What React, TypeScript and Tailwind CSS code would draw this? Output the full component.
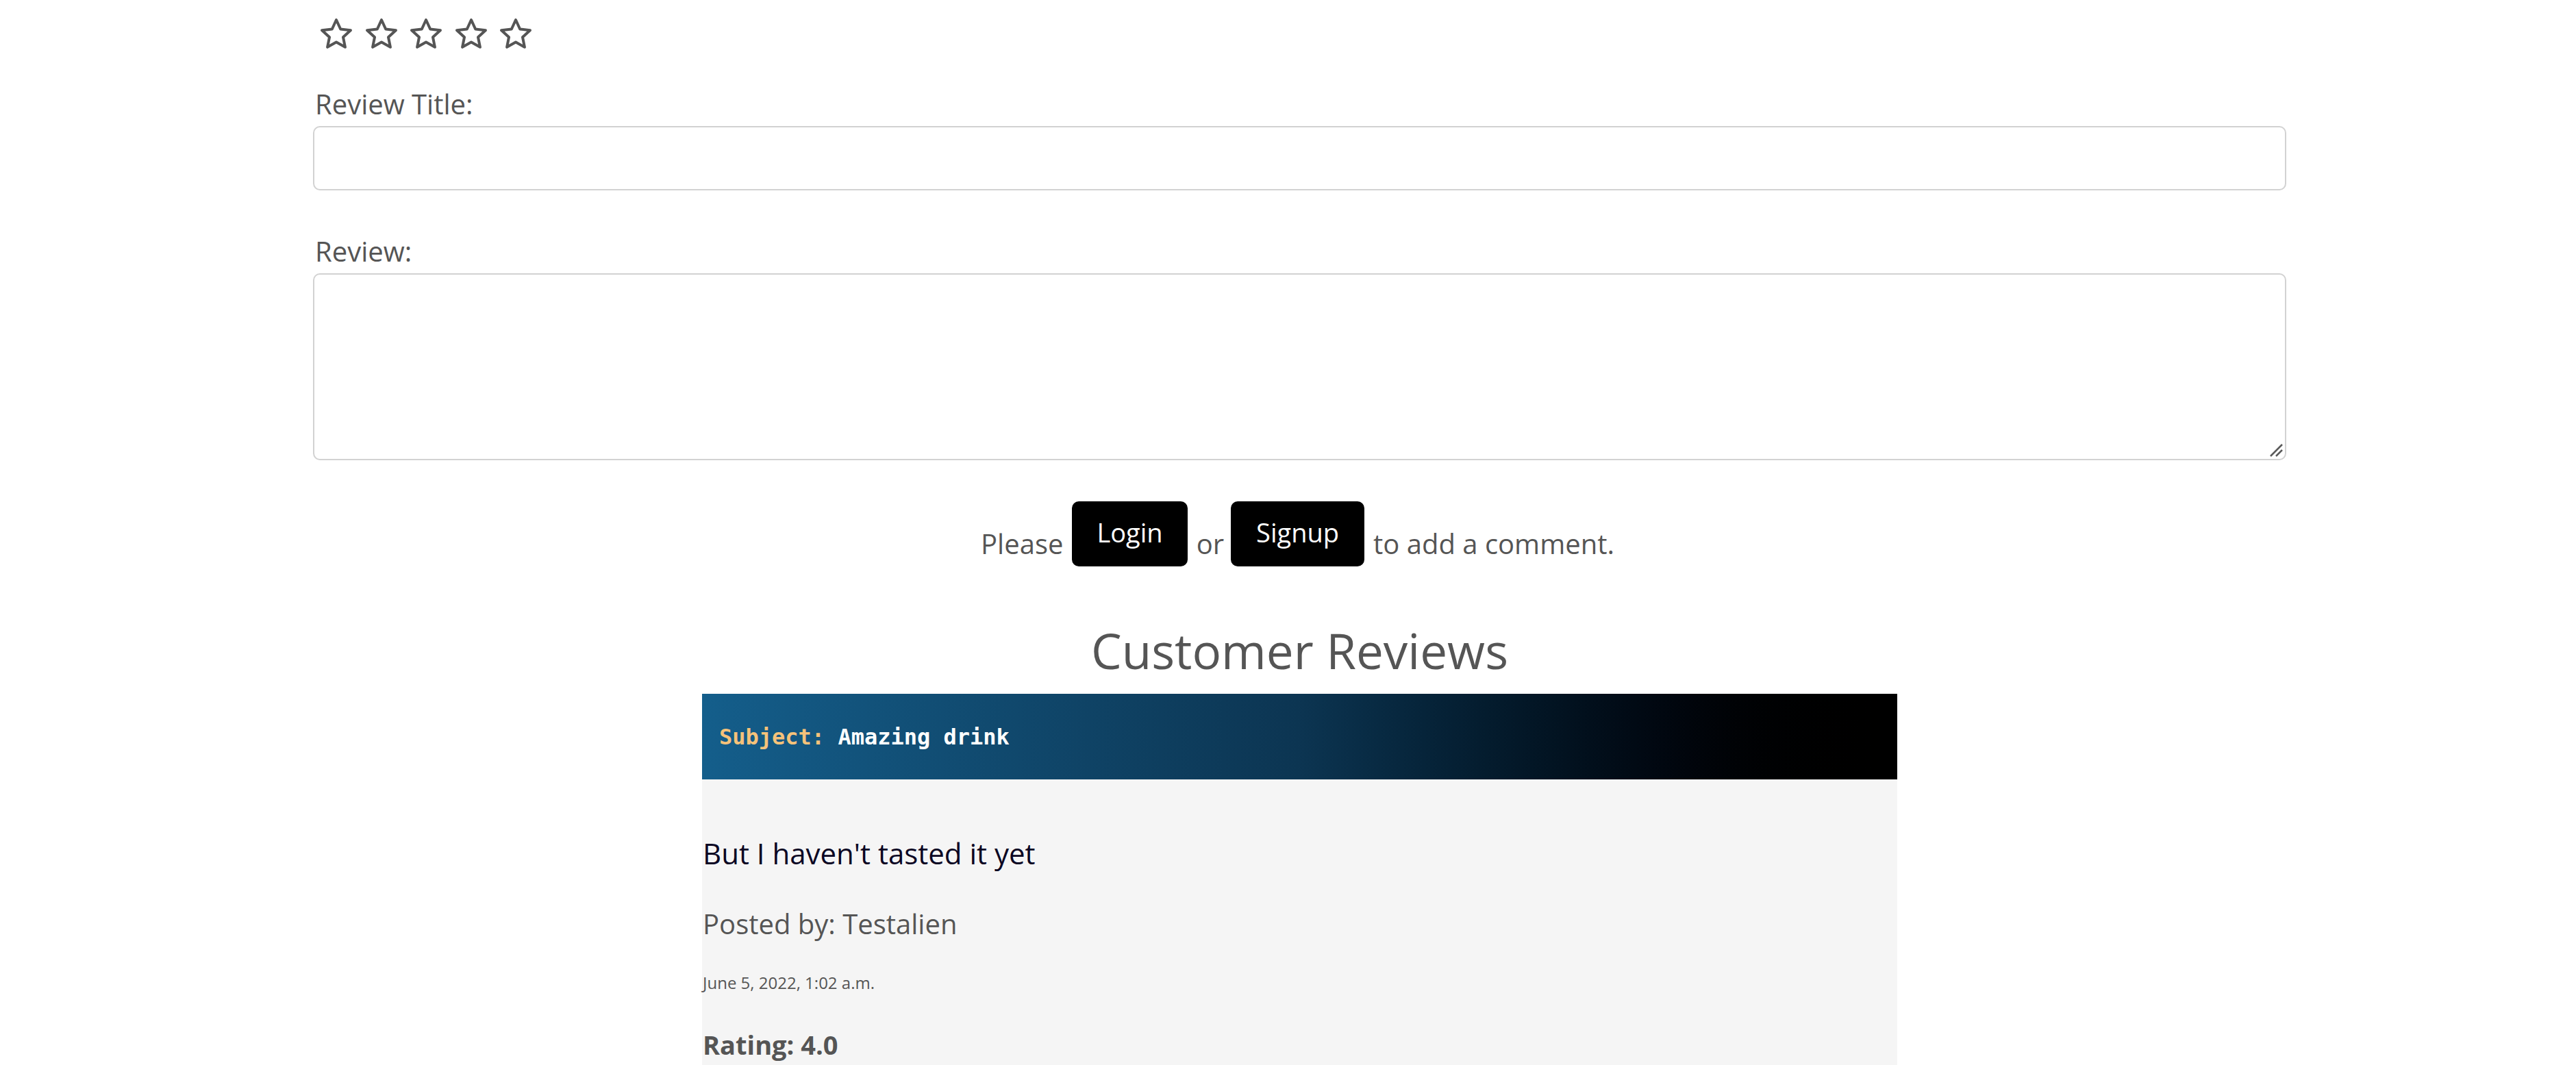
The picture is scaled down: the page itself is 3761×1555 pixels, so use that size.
import React from 'react';

const STAR_POINTS = '24,2 30.17,15.51 44.92,17.2 33.99,27.24 36.93,41.8 24,34.5 11.07,41.8 14.01,27.24 3.08,17.2 17.83,15.51';

const StarOutline = () => (
    <svg width="48" height="44" viewBox="0 0 48 44" fill="none">
        <polygon points={STAR_POINTS} stroke="#555555" strokeWidth="4" strokeLinejoin="round" />
    </svg>
);

const review = {
    subject: 'Amazing drink',
    body: "But I haven't tasted it yet",
    author: 'Testalien',
    date: 'June 5, 2022, 1:02 a.m.',
    rating: '4.0',
};

export default function App() {
    return (
        <div className="min-h-screen bg-white text-[#555555] font-['Open_Sans',sans-serif]">
            <div className="ml-[457px] w-[2881px] pt-[27px]">
                {/* Star rating picker */}
                <div className="flex gap-[17.6px] pl-[10px] h-[44px]">
                    {[0, 1, 2, 3, 4].map((i) => (
                        <StarOutline key={i} />
                    ))}
                </div>

                {/* Review form */}
                <label className="block mt-[61px] pl-[3px] text-[40px] leading-none">Review Title:</label>
                <input
                    type="text"
                    className="block mt-[12px] w-full h-[94px] border-2 border-[#d2d2d2] rounded-[10px] bg-white px-4 text-[36px] outline-none"
                />

                <label className="block mt-[69px] pl-[3px] text-[40px] leading-none">Review:</label>
                <div className="relative mt-[12px]">
                    <textarea className="block w-full h-[273px] border-2 border-[#d2d2d2] rounded-[10px] bg-white px-4 py-2 text-[36px] outline-none resize-none" />
                    <svg className="absolute right-[3px] bottom-[3px]" width="24" height="24" viewBox="0 0 24 24">
                        <line x1="4" y1="21" x2="21" y2="4" stroke="#5a5a5a" strokeWidth="2.5" />
                        <line x1="12" y1="21" x2="21" y2="12" stroke="#5a5a5a" strokeWidth="2.5" />
                    </svg>
                </div>

                {/* Auth prompt */}
                <div className="mt-[60px] h-[95px] flex items-end justify-center gap-[13px] pr-[6px]">
                    <span className="text-[40px] leading-none mb-[13px]">Please</span>
                    <button className="h-[95px] px-[36px] pb-[5px] rounded-[10px] bg-black text-white text-[38px] leading-none flex items-center">
                        Login
                    </button>
                    <span className="text-[40px] leading-none mb-[13px] -mr-[3px]">or</span>
                    <button className="h-[95px] px-[37px] pb-[5px] rounded-[10px] bg-black text-white text-[38px] leading-none flex items-center">
                        Signup
                    </button>
                    <span className="text-[40px] leading-none mb-[13px]">to add a comment.</span>
                </div>

                {/* Reviews list */}
                <h2 className="mt-[87px] text-center text-[71px] leading-none">Customer Reviews</h2>

                <div className="mt-[28px] mx-auto w-[1745px] bg-[#f5f5f5]">
                    <div className="h-[125px] flex items-center pl-[25px] bg-linear-to-r from-[#145e8b] via-[#0c3552] to-black font-['DejaVu_Sans_Mono',monospace] font-bold text-[32px]">
                        <span className="text-[#f5c27a]">Subject:</span>
                        <span className="text-white">&nbsp;{review.subject}</span>
                    </div>
                    <div className="pt-[87px] pb-[40px] pl-[1px]">
                        <p className="text-[42px] leading-none text-[#0b0623]">{review.body}</p>
                        <p className="mt-[62px] text-[40px] leading-none">Posted by: {review.author}</p>
                        <p className="mt-[54px] text-[24px] leading-none">{review.date}</p>
                        <p className="mt-[59px] text-[38px] leading-none font-bold">Rating: {review.rating}</p>
                    </div>
                </div>
            </div>
        </div>
    );
}
